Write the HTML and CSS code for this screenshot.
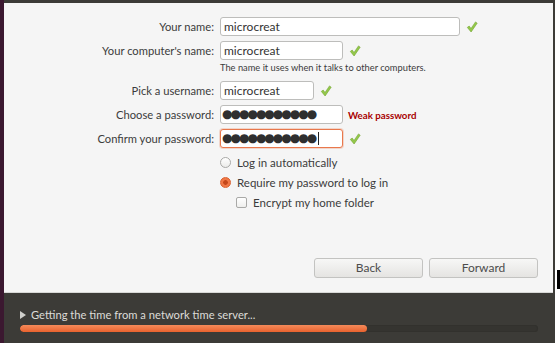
FILE: index.html
```html
<!DOCTYPE html>
<html>
<head>
<meta charset="utf-8">
<link rel="stylesheet" href="styles.css">
</head>
<body>
<div class="screen">
  <div class="purple"></div>
  <div class="window">
    <div class="topbar"></div>
    <div class="panel">
      <div class="form">
        <div class="row">
          <div class="label">Your name:</div>
          <div class="input w-long">microcreat</div>
          <svg class="check" viewBox="0 0 12 12"><path d="M1.3 6.4 L3.2 5 L5 7.5 L9.5 0.9 L11.2 2.2 L5.1 11 Z" fill="#94c94a" stroke="#74a532" stroke-width="0.6" stroke-linejoin="round"/></svg>
        </div>
        <div class="row">
          <div class="label">Your computer's name:</div>
          <div class="input w-mid">microcreat</div>
          <svg class="check" viewBox="0 0 12 12"><path d="M1.3 6.4 L3.2 5 L5 7.5 L9.5 0.9 L11.2 2.2 L5.1 11 Z" fill="#94c94a" stroke="#74a532" stroke-width="0.6" stroke-linejoin="round"/></svg>
        </div>
        <div class="hint">The name it uses when it talks to other computers.</div>
        <div class="row">
          <div class="label">Pick a username:</div>
          <div class="input w-short">microcreat</div>
          <svg class="check" viewBox="0 0 12 12"><path d="M1.3 6.4 L3.2 5 L5 7.5 L9.5 0.9 L11.2 2.2 L5.1 11 Z" fill="#94c94a" stroke="#74a532" stroke-width="0.6" stroke-linejoin="round"/></svg>
        </div>
        <div class="row">
          <div class="label">Choose a password:</div>
          <div class="input w-mid dots">●●●●●●●●●●●</div>
          <div class="weak">Weak password</div>
        </div>
        <div class="row">
          <div class="label">Confirm your password:</div>
          <div class="input w-mid dots focus">●●●●●●●●●●●<span class="caret"></span></div>
          <svg class="check" viewBox="0 0 12 12"><path d="M1.3 6.4 L3.2 5 L5 7.5 L9.5 0.9 L11.2 2.2 L5.1 11 Z" fill="#94c94a" stroke="#74a532" stroke-width="0.6" stroke-linejoin="round"/></svg>
        </div>
        <div class="options">
          <div class="opt"><span class="radio"></span>Log in automatically</div>
          <div class="opt"><span class="radio on"></span>Require my password to log in</div>
          <div class="opt sub"><span class="box"></span>Encrypt my home folder</div>
        </div>
      </div>
      <div class="buttons">
        <div class="btn">Back</div>
        <div class="btn">Forward</div>
      </div>
    </div>
    <div class="status">
      <div class="msg"><span class="tri"></span>Getting the time from a network time server...</div>
      <div class="trough"><div class="fill" style="width:67%"></div></div>
    </div>
    <div class="bottomedge"></div>
  </div>
  <div class="rborder"></div>
  <div class="outside"><div class="mark"></div></div>
</div>
</body>
</html>
```

FILE: styles.css
```css
html, body {
  margin: 0;
  padding: 0;
  background: #ffffff;
}
body {
  font-family: Lato, "Open Sans", sans-serif;
  font-size: 11.2px;
  color: #3c3c3c;
}
.screen {
  display: flex;
  width: 560px;
  height: 345px;
}
.purple {
  width: 4px;
  height: 343px;
  background: #3b1830;
}
.window {
  width: 549px;
  display: flex;
  flex-direction: column;
}
.topbar {
  height: 3px;
  background: #3c3b37;
}
.panel {
  height: 290px;
  background: #f5f5f5;
  display: flex;
  flex-direction: column;
  justify-content: space-between;
  box-sizing: border-box;
  border-bottom: 1px solid #d8d8d6;
}
.form {
  padding-top: 14px;
  display: flex;
  flex-direction: column;
}
.row {
  display: flex;
  align-items: center;
  height: 19px;
  margin-bottom: 5px;
}
.label {
  width: 210px;
  text-align: right;
  margin-right: 6px;
  flex: none;
}
.input {
  box-sizing: border-box;
  height: 19px;
  border: 1px solid #bdbdbb;
  border-radius: 3px;
  background: #ffffff;
  padding-left: 3px;
  line-height: 17px;
  font-size: 12px;
  color: #333;
  flex: none;
  display: flex;
  align-items: center;
}
.w-long { width: 240px; }
.w-mid { width: 123px; }
.w-short { width: 94px; }
.dots {
  font-family: "DejaVu Sans", sans-serif;
  font-size: 12px;
  letter-spacing: -2px;
  color: #2f2f2f;
  padding-left: 1px;
}
.focus {
  border-color: #e9784c;
  box-shadow: 0 0 0 1px rgba(233,120,76,0.25);
}
.caret {
  display: inline-block;
  width: 1px;
  height: 13px;
  background: #222;
  margin-left: 3px;
}
.check {
  width: 12px;
  height: 12px;
  margin-left: 6px;
}
.hint {
  font-size: 9.3px;
  margin-left: 216px;
  margin-top: -3px;
  margin-bottom: 8px;
  color: #3c3c3c;
}
.weak {
  margin-left: 5px;
  font-size: 9.7px;
  font-weight: bold;
  color: #a80000;
}
.options {
  margin-left: 216px;
  display: flex;
  flex-direction: column;
  gap: 7px;
  margin-top: 3px;
}
.opt {
  display: flex;
  align-items: center;
  height: 13px;
  gap: 6px;
  font-size: 11.5px;
}
.sub {
  margin-left: 16px;
}
.radio {
  width: 11px;
  height: 11px;
  box-sizing: border-box;
  border: 1px solid #a9a9a7;
  border-radius: 50%;
  background: linear-gradient(#ffffff, #ececea);
  flex: none;
}
.radio.on {
  border-color: #d9602f;
  background: radial-gradient(circle, #c4471a 0 2px, #f07746 2.6px);
}
.box {
  width: 11px;
  height: 11px;
  box-sizing: border-box;
  border: 1px solid #a9a9a7;
  border-radius: 2px;
  background: linear-gradient(#ffffff, #efefed);
  flex: none;
}
.buttons {
  display: flex;
  justify-content: flex-end;
  gap: 6px;
  padding-right: 15px;
  padding-bottom: 14px;
}
.btn {
  box-sizing: border-box;
  width: 109px;
  height: 20px;
  border: 1px solid #c3c3c1;
  border-radius: 3px;
  background: linear-gradient(#f7f7f6, #e5e4e2);
  text-align: center;
  line-height: 18px;
  font-size: 12px;
  color: #4c4c4c;
}
.status {
  height: 50px;
  background: #3c3b37;
  box-sizing: border-box;
  padding: 15px 15px 0 16px;
}
.msg {
  display: flex;
  align-items: center;
  color: #dcdcd8;
  font-size: 11.2px;
  height: 13px;
}
.tri {
  width: 0;
  height: 0;
  border-left: 6px solid #cfcfcb;
  border-top: 4px solid transparent;
  border-bottom: 4px solid transparent;
  margin-right: 5px;
}
.trough {
  margin-top: 4px;
  height: 7px;
  border-radius: 4px;
  background: #353430;
  box-shadow: inset 0 0 0 1px #32312d;
  overflow: hidden;
}
.fill {
  height: 100%;
  border-radius: 4px;
  background: linear-gradient(#f48a5a, #e9622e);
}
.bottomedge {
  height: 2px;
  background: #ffffff;
}
.rborder {
  width: 2px;
  height: 343px;
  background: #3c3b37;
}
.outside {
  flex: 1;
  padding-top: 270px;
  padding-left: 2px;
}
.mark {
  width: 3px;
  height: 19px;
  background: #000;
}
```
